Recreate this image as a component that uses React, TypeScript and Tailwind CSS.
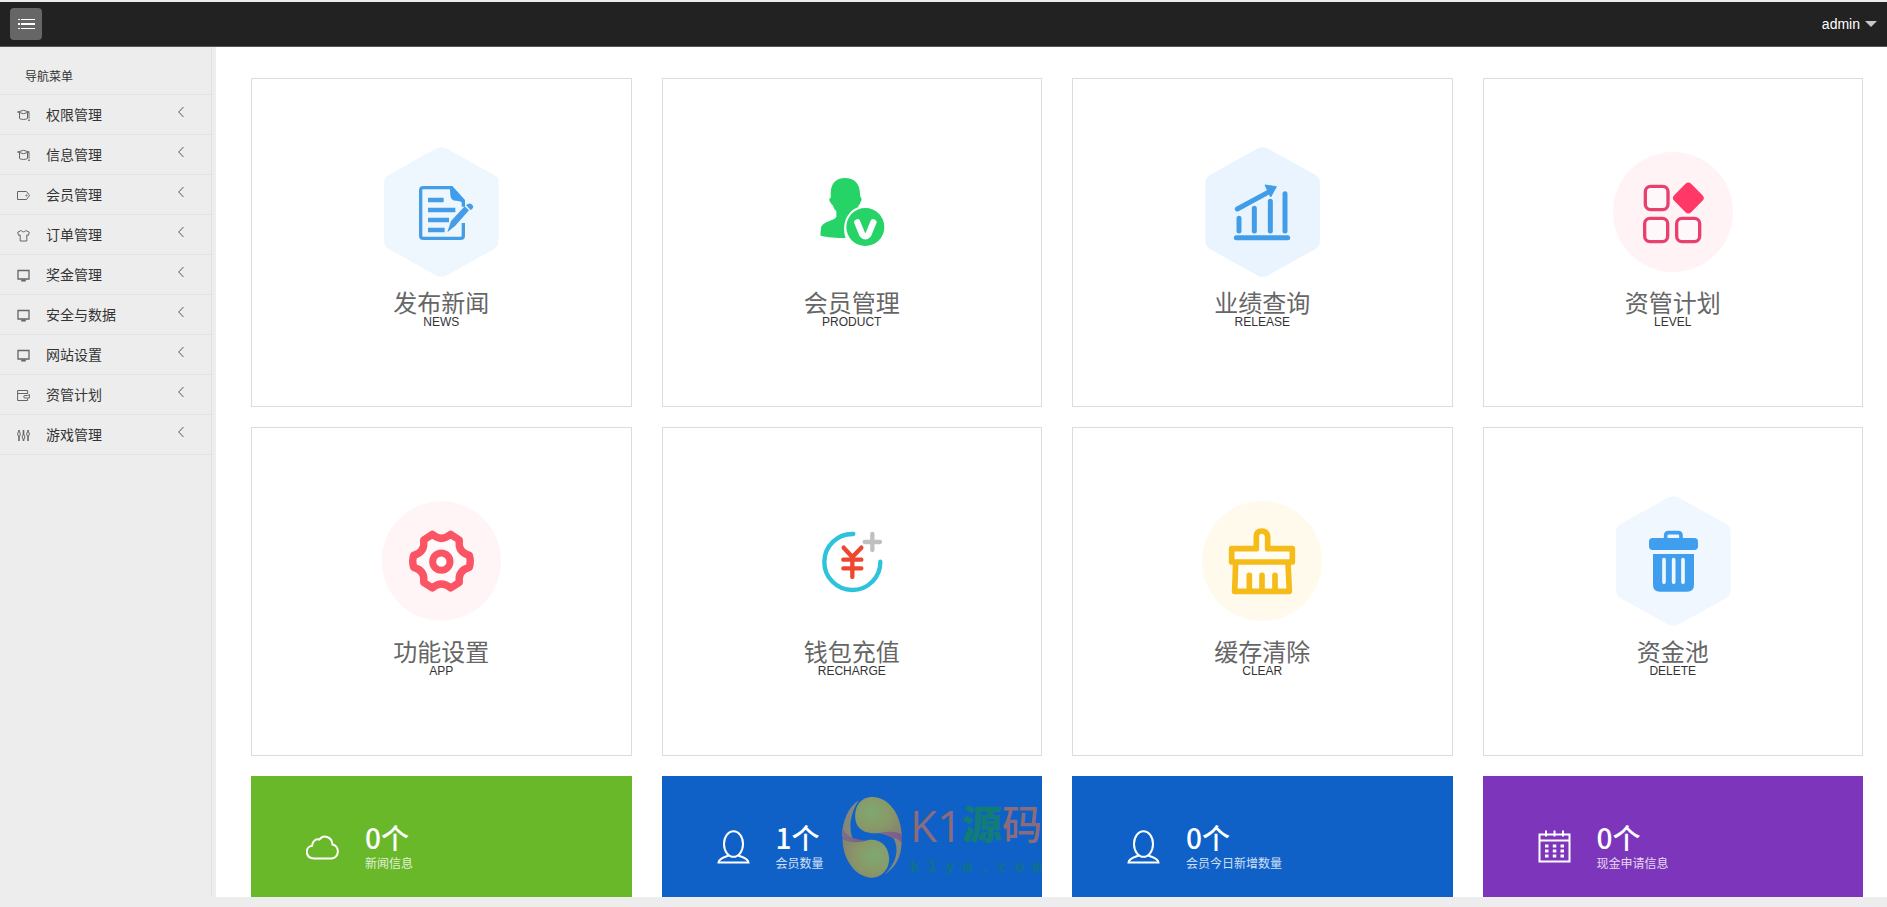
import type { ReactNode } from 'react';

type MenuIconName = 'cap' | 'tag' | 'shirt' | 'screen' | 'wallet' | 'sliders';

const menu: { label: string; icon: MenuIconName }[] = [
  { label: '权限管理', icon: 'cap' },
  { label: '信息管理', icon: 'cap' },
  { label: '会员管理', icon: 'tag' },
  { label: '订单管理', icon: 'shirt' },
  { label: '奖金管理', icon: 'screen' },
  { label: '安全与数据', icon: 'screen' },
  { label: '网站设置', icon: 'screen' },
  { label: '资管计划', icon: 'wallet' },
  { label: '游戏管理', icon: 'sliders' },
];

const menuIcons: Record<MenuIconName, ReactNode> = {
  cap: (
    <>
      <path d="M.5 3 6.500 1.300 12.300 3 6.500 4.700z" />
      <path d="M2.500 4v5.500c2 1.300 6 1.300 8 0V4M12 3.500V9.500" />
      <path d="M12 10.500v1.500" strokeWidth="1.600" />
    </>
  ),
  tag: (
    <>
      <path d="M.5 2.500h9l3 4-3 4h-9z" />
      <circle cx="9.500" cy="6.500" r=".6" />
    </>
  ),
  shirt: <path d="M4.300 1.500C5 3.300 8 3.300 8.700 1.500l3.600 1.700-.9 3.100-1.600-.3v6H3.200V6l-1.600.3-.9-3.100z" />,
  screen: (
    <>
      <path d="M1 1.500h11v8.500H1z" strokeWidth="1.300" />
      <path d="M4.200 11.500h4.600" strokeWidth="2" />
    </>
  ),
  wallet: (
    <>
      <path d="M.6 3v8.500h10v-2M.6 3V1.500h10v3.500M.6 4.500h10" />
      <path d="M12.400 5.500v3.500H8c-1.800 0-1.800-2.500 0-2.500h2.500z" />
    </>
  ),
  sliders: (
    <>
      <path d="M2 1v2M2 7v5M6.500 1v5M6.500 10v2M11 1v2M11 7v5" strokeWidth="1.600" />
      <rect x=".8" y="3" width="2.400" height="4" rx="1" />
      <rect x="5.300" y="6" width="2.400" height="4" rx="1" />
      <rect x="9.800" y="3" width="2.400" height="4" rx="1" />
    </>
  ),
};

function Hexagon({ x, y, fill }: { x: number; y: number; fill: string }) {
  return (
    <path
      transform={`translate(${x} ${y})`}
      fill={fill}
      d="M-20-188Q0-201 20-188L160-110Q172-102 172-86V86Q172 102 160 110L20 188Q0 201-20 188L-160 110Q-172 102-172 86V-86Q-172-102-160-110Z"
    />
  );
}

const newsArt = (
  <svg viewBox="3 30 480 420" className="h-[140px] w-40" fill="none" aria-hidden="true">
    <Hexagon x={244} y={246} fill="#eff7fe" />
    <path d="M272 173H190q-8 0-8 8v136q0 8 8 8h112q8 0 8-8v-38M310 230v-18" stroke="#459de8" strokeWidth="10" />
    <path d="M269 168h8l38 42v20q-6-18-26-18-18 0-18-18z" fill="#3f9dee" />
    <path d="M204 210h47M204 240h82M204 270h63M204 300h50" stroke="#459de8" strokeWidth="13" />
    <path d="M262 307l11-34 41-44 13 12-41 46z" fill="#459de8" />
    <path d="M318 226q12-11 20 0 5 8-6 14z" fill="#459de8" />
  </svg>
);

const memberArt = (
  <svg viewBox="-25 30 480 420" className="h-[140px] w-40" fill="none" aria-hidden="true">
    <path
      fill="#25d366"
      d="M194 144c-27 0-43 16-43 48l1 10q-9 5-2 15 3 6 7 9 4 12 11 18v16c-3 12-46 14-46 36-2 12-2 18-1 21 18 5 49 7 75 7-13-40 3-80 38-93l1-5q5-4 6-11 6-8-1-15l-1-8c0-32-18-48-45-48z"
    />
    <circle cx="255" cy="291" r="57" fill="#25d366" />
    <path d="M231 277l15 37q9 10 18 0l15-37" stroke="#fff" strokeWidth="19" strokeLinecap="round" strokeLinejoin="round" />
  </svg>
);

const chartArt = (
  <svg viewBox="6 30 480 420" className="h-[140px] w-40" fill="none" aria-hidden="true">
    <Hexagon x={248} y={246} fill="#eaf4fe" />
    <g stroke="#429de8" strokeWidth="15" strokeLinecap="round">
      <path d="M169 323h154M177 265v38M223 235v68M271 214v89M315 191v112M172 237l92-50" />
    </g>
    <path d="M255 165l34 5-17 31z" fill="#429de8" stroke="#429de8" strokeWidth="3" strokeLinejoin="round" />
  </svg>
);

const planArt = (
  <svg viewBox="9 30 480 420" className="h-[140px] w-40" fill="none" aria-hidden="true">
    <circle cx="249" cy="246" r="180" fill="#fff3f6" />
    <g stroke="#e8416d" strokeWidth="10" fill="#fff8fa">
      <rect x="166" y="169" width="68" height="70" rx="16" />
      <rect x="164" y="265" width="69" height="70" rx="16" />
      <rect x="260" y="265" width="69" height="70" rx="16" />
    </g>
    <rect x="259" y="168" width="72" height="72" rx="12" transform="rotate(45 295 204)" fill="#ff3868" />
  </svg>
);

const gearArt = (
  <svg viewBox="3 27 480 420" className="h-[140px] w-40" fill="none" aria-hidden="true">
    <circle cx="244" cy="243" r="179" fill="#fff5f6" />
    <path
      d="M217 163q27 24 55 0l26 17q-5 37 30 46 6 17 0 36-35 9-30 45l-26 17q-28-24-55 0l-26-17q5-36-30-45-6-19 0-36 35-9 30-46z"
      fill="#fff9fa"
      stroke="#fb5464"
      strokeWidth="22"
      strokeLinejoin="round"
    />
    <circle cx="244" cy="245" r="26" stroke="#fb5464" strokeWidth="21" fill="#fff" />
  </svg>
);

const rechargeArt = (
  <svg viewBox="-25 27 480 420" className="h-[140px] w-40" fill="none" aria-hidden="true">
    <path d="M219 162A84 84 0 1 0 300 245" stroke="#2cc3db" strokeWidth="13" strokeLinecap="round" />
    <path d="M190 203l26 28 27-28M216 231v60M189 239h54M189 265h54" stroke="#ef4630" strokeWidth="13" strokeLinecap="round" />
    <path d="M253 186h46M276 162v48" stroke="#c0c0c0" strokeWidth="13" strokeLinecap="round" />
  </svg>
);

const clearArt = (
  <svg viewBox="6 27 480 420" className="h-[140px] w-40" fill="none" aria-hidden="true">
    <circle cx="246" cy="243" r="180" fill="#fffaec" />
    <g stroke="#f5bb18" strokeWidth="17" strokeLinecap="round" strokeLinejoin="round">
      <path d="M167 248l-3 86h164l-4-86" fill="#fffdf6" />
      <path d="M155 246v-40h74v-36q0-17 16-17t18 17v36h74v40z" fill="#fffdf6" />
      <path d="M208 286v46M246 286v46M285 286v46" />
    </g>
  </svg>
);

const trashArt = (
  <svg viewBox="9 27 480 420" className="h-[140px] w-40" fill="none" aria-hidden="true">
    <Hexagon x={250} y={243} fill="#f0f7fe" />
    <path d="M227 178v-11q0-9 9-9h28q9 0 9 9v11" stroke="#3f9eee" strokeWidth="11" />
    <rect x="177" y="174" width="147" height="36" rx="11" fill="#3f9eee" />
    <path d="M189 222h123v92q0 21-21 21h-81q-21 0-21-21z" fill="#3f9eee" />
    <path d="M222 239v68M251 239v68M279 239v68" stroke="#f0f7fe" strokeWidth="11" strokeLinecap="round" />
  </svg>
);

const shortcuts = [
  { title: '发布新闻', sub: 'NEWS', art: newsArt },
  { title: '会员管理', sub: 'PRODUCT', art: memberArt },
  { title: '业绩查询', sub: 'RELEASE', art: chartArt },
  { title: '资管计划', sub: 'LEVEL', art: planArt },
  { title: '功能设置', sub: 'APP', art: gearArt },
  { title: '钱包充值', sub: 'RECHARGE', art: rechargeArt },
  { title: '缓存清除', sub: 'CLEAR', art: clearArt },
  { title: '资金池', sub: 'DELETE', art: trashArt },
];

const cloudIcon = <path d="M8 28.500C-1 28-1.500 17 6 15.800 6.500 10.500 10.500 8.500 13.500 9.500 17 4 26 6.500 26.500 14.500 34 16 33.500 28 25.500 28.500z" />;
const userIcon = (
  <>
    <ellipse cx="16.500" cy="14" rx="9.500" ry="12.800" />
    <path d="M12 25.500c-4 1.500-10 2.500-10.500 7h30c-.5-4.500-6.500-5.500-10.500-7" />
  </>
);
const calendarIcon = (
  <>
    <path d="M1.500 4.500h30v27h-30zM1.500 10.500h30M8 .5v6M16.500 .5v6M25 .5v6" />
    <path d="M7 16h3.500M14.800 16h3.500M22.500 16H26M7 21h3.500M14.800 21h3.500M22.500 21H26M7 26h3.500M14.800 26h3.500M22.500 26H26" strokeWidth="3" />
  </>
);

const stats = [
  { value: '0个', label: '新闻信息', color: 'bg-[#69b82a]', icon: cloudIcon },
  { value: '1个', label: '会员数量', color: 'bg-[#0f61c8]', icon: userIcon, logo: true },
  { value: '0个', label: '会员今日新增数量', color: 'bg-[#0f61c8]', icon: userIcon },
  { value: '0个', label: '现金申请信息', color: 'bg-[#7d36bb]', icon: calendarIcon },
];

function SiteLogo() {
  return (
    <div className="pointer-events-none absolute top-[21px] right-0 flex w-50 items-start gap-2" aria-label="K1源码">
      <svg viewBox="0 0 178 242" className="h-[81px] w-15 shrink-0" aria-hidden="true">
        <defs>
          <radialGradient id="upper" cx=".35" cy=".4" r=".75">
            <stop offset="0" stopColor="#7fa873" />
            <stop offset=".5" stopColor="#889a68" />
            <stop offset="1" stopColor="#87836d" />
          </radialGradient>
          <radialGradient id="lower" cx=".7" cy=".45" r=".75">
            <stop offset="0" stopColor="#7fa873" />
            <stop offset=".5" stopColor="#889a68" />
            <stop offset="1" stopColor="#87836d" />
          </radialGradient>
          <linearGradient id="edge" x1="0" x2="1">
            <stop offset="0" stopColor="#7d6f85" />
            <stop offset="1" stopColor="#80598a" />
          </linearGradient>
        </defs>
        <path d="M50 10C18 30 0 72 0 118q10 14 34 14C18 96 22 50 50 10z" fill="#84887a" />
        <path d="M0 92c10 24 34 36 70 38-28 10-56 6-70-12z" fill="url(#edge)" />
        <path d="M40 70C34 30 54 0 90 0c48 0 86 50 88 116-14-10-42-12-72-8-34 2-60-8-66-38z" fill="url(#upper)" />
        <path d="M178 112c1 14 0 26-3 38-10-24-34-36-65-42 26-6 54-6 68 4z" fill="url(#edge)" />
        <path d="M1 122c16 16 46 16 80 6 30-4 54 16 58 46 6 32-14 66-50 67C44 242 0 190 1 122z" fill="url(#lower)" />
        <path d="M126 232c34-20 52-58 51-96-6-8-14-12-24-14 18 34 10 76-27 110z" fill="#84887a" />
      </svg>
      <div className="flex min-w-0 flex-1 flex-col pt-1">
        <div className="flex h-12 items-center justify-between leading-12">
          <span className="font-['Open_Sans','Noto_Sans_CJK_SC',sans-serif] text-[44px] leading-12 text-[#8c6b7b]">K1</span>
          <span className="text-[40px] font-black text-[#117c78]">源</span>
          <span className="text-[40px] font-medium text-[#8c6b7b]">码</span>
        </div>
        <div className="mt-2 flex justify-between font-['DejaVu_Sans_Mono',monospace] text-base leading-5 font-bold text-[#0e7288]">
          {Array.from('k1ym.com').map((char, i) => (
            <span key={i}>{char}</span>
          ))}
        </div>
      </div>
    </div>
  );
}

export default function App() {
  return (
    <div className="flex min-h-screen flex-col bg-[#ededed] pb-[10px] font-['Liberation_Sans','Noto_Sans_CJK_SC',sans-serif] text-[#333]">
      <header className="flex h-[47px] items-center justify-between border-t-2 border-b border-t-[#e9ebec] border-b-[#555] bg-[#222] px-[10px]">
        <button type="button" aria-label="切换菜单" className="flex size-8 items-center justify-center rounded-sm bg-[#666] text-white">
          <svg viewBox="0 0 18 14" className="h-[14px] w-[18px]" stroke="currentColor" aria-hidden="true">
            <path d="M1 2.500h2M4 2.500h14M1 11.500h2M4 11.500h14" strokeWidth="1" />
            <path d="M1 7h2M4 7h14" strokeWidth="2" />
          </svg>
        </button>
        <button type="button" className="flex items-center gap-[5px] text-sm text-white">
          admin
          <svg viewBox="0 0 12 6" className="h-[6px] w-3" aria-hidden="true">
            <path d="M0 0h12L6 6z" fill="#c8c8c8" />
          </svg>
        </button>
      </header>

      <div className="flex flex-1">
        <nav className="w-54 shrink-0 pr-1">
          <div className="h-full border-r border-[#e2e2e2]">
            <h2 className="h-12 border-b border-[#e2e2e2] pt-[21px] pl-[25px] text-xs leading-[18px]">导航菜单</h2>
            <ul>
              {menu.map((item) => (
                <li key={item.label} className="h-10 border-b border-[#e2e2e2]">
                  <a href="#" className="flex h-full items-center pr-[27px] pl-[17px] text-sm">
                    <svg viewBox="0 0 13 13" className="mt-[2px] mr-4 size-[13px]" fill="none" stroke="#666" strokeWidth="1" aria-hidden="true">
                      {menuIcons[item.icon]}
                    </svg>
                    <span className="flex-1">{item.label}</span>
                    <svg viewBox="0 0 6 12" className="mb-[6px] h-3 w-[6px]" fill="none" stroke="#555" aria-hidden="true">
                      <path d="M5.500 1 .7 6l4.800 5" />
                    </svg>
                  </a>
                </li>
              ))}
            </ul>
          </div>
        </nav>

        <main className="flex-1 bg-white pt-[31px] pr-6 pl-[35px]">
          <div className="grid grid-cols-4 gap-x-[30px] gap-y-5">
            {shortcuts.map((item) => (
              <a
                key={item.sub}
                href="#"
                className="flex flex-col items-center border border-[#dcdcdc] pt-[61px] pb-[78px] text-center"
              >
                {item.art}
                <span className="mt-3 text-2xl leading-6 text-[#666]">{item.title}</span>
                <span className="text-xs leading-3">{item.sub}</span>
              </a>
            ))}
            {stats.map((item) => (
              <section key={item.label} className={`relative flex h-[121px] items-center gap-[26px] pl-[55px] text-white ${item.color}`}>
                <svg viewBox="0 0 33 34" className="mt-5 h-[34px] w-[33px]" fill="none" stroke="currentColor" strokeWidth="2" aria-hidden="true">
                  {item.icon}
                </svg>
                <div className="pt-[18px]">
                  <p className="font-['Noto_Sans_CJK_SC',sans-serif] text-[28px] leading-9 font-medium">{item.value}</p>
                  <p className="text-xs leading-[18px] opacity-80">{item.label}</p>
                </div>
                {item.logo && <SiteLogo />}
              </section>
            ))}
          </div>
        </main>
      </div>
    </div>
  );
}
